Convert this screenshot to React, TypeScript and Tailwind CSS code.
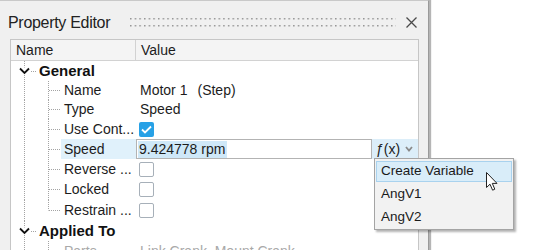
import React from "react";

const DOT = "#a3a3a3";

function ChildLines({ h, last }: { h: number; last?: boolean }) {
  const mid = Math.floor(h / 2) + 0.5;
  return (
    <svg width="50" height={h} className="shrink-0">
      <line x1="13.5" y1="0" x2="13.5" y2={h} stroke={DOT} strokeDasharray="1 1" />
      <line x1="37.5" y1="0" x2="37.5" y2={last ? mid : h} stroke={DOT} strokeDasharray="1 1" />
      <line x1="38" y1={mid} x2="50" y2={mid} stroke={DOT} strokeDasharray="1 1" />
    </svg>
  );
}

function GroupLines({ h }: { h: number }) {
  const mid = Math.floor(h / 2) + 0.5;
  return (
    <svg width="26" height={h} className="shrink-0">
      <line x1="13.5" y1="0" x2="13.5" y2={h} stroke={DOT} strokeDasharray="1 1" />
      <line x1="18" y1={mid} x2="26" y2={mid} stroke={DOT} strokeDasharray="1 1" />
      <rect x="8" y={mid - 4} width="11" height="7" fill="white" />
      <path d={`M9 ${mid - 3} L13.5 ${mid + 1.5} L18 ${mid - 3}`} stroke="#111" strokeWidth="1.8" fill="none" />
    </svg>
  );
}

function CheckBox({ checked }: { checked?: boolean }) {
  if (checked)
    return (
      <div className="w-[15px] h-[15px] rounded-[2px] bg-[#27a1e6] flex items-center justify-center">
        <svg width="11" height="9" viewBox="0 0 11 9">
          <path d="M1 4.5 L4 7.5 L10 1.5" stroke="white" strokeWidth="1.8" fill="none" />
        </svg>
      </div>
    );
  return <div className="w-[15px] h-[15px] rounded-[2px] border border-[#a7b0b9] bg-white" />;
}

function Group({ label, h }: { label: string; h: number }) {
  return (
    <div className="flex" style={{ height: h }}>
      <GroupLines h={h} />
      <div className="pl-[2px] flex items-center font-bold text-[15px] text-[#111]">{label}</div>
    </div>
  );
}

function Row({
  name,
  h,
  last,
  active,
  muted,
  children,
}: {
  name: string;
  h: number;
  last?: boolean;
  active?: boolean;
  muted?: boolean;
  children?: React.ReactNode;
}) {
  return (
    <div className="flex" style={{ height: h }}>
      <div className="w-[125px] flex shrink-0">
        <ChildLines h={h} last={last} />
        <div
          className={`flex-1 pl-[3px] flex items-center whitespace-nowrap ${active ? "bg-[#e0f1fb]" : ""} ${
            muted ? "text-[#a9a9a9]" : "text-[#1c1c1c]"
          }`}
        >
          {name}
        </div>
      </div>
      <div className={`flex-1 flex items-center ${muted ? "text-[#a9a9a9]" : "text-[#1c1c1c]"}`}>{children}</div>
    </div>
  );
}

export default function App() {
  return (
    <div className="w-[533px] h-[250px] bg-white relative overflow-hidden font-['Liberation_Sans',Arial,sans-serif] text-[14px]">
      <div className="w-[429px] h-full bg-[#f0f0f0] border-t border-[#c9c9c9] border-r border-r-[#9a9a9a] shadow-[2px_0_1px_#b5b5b5] flex flex-col">
        {/* title bar */}
        <div className="h-[38px] shrink-0 flex items-center pl-2 pr-[11px] pt-[5px]">
          <span className="text-[16px] tracking-[-0.3px] text-[#222]">Property Editor</span>
          <svg className="flex-1 ml-[20px] mr-[10px]" height="10">
            <defs>
              <pattern id="grip" width="4.66" height="7" patternUnits="userSpaceOnUse">
                <rect x="0" y="0" width="1.5" height="1.5" fill="#959595" />
              </pattern>
            </defs>
            <rect x="0" y="0" width="100%" height="9" fill="url(#grip)" />
          </svg>
          <svg width="11" height="11" viewBox="0 0 11 11">
            <path d="M0.5 0.5 L10.5 10.5 M10.5 0.5 L0.5 10.5" stroke="#4a4a4a" strokeWidth="1.3" />
          </svg>
        </div>

        {/* table */}
        <div className="ml-[10px] w-[409px] flex-1 border border-[#c6c6c6] bg-white flex flex-col">
          <div className="h-[21px] shrink-0 flex bg-[#f4f4f4] border-b border-[#d2d2d2] text-[#1c1c1c]">
            <div className="w-[125px] border-r border-[#d2d2d2] pl-[5px] flex items-center">Name</div>
            <div className="pl-[5px] flex items-center">Value</div>
          </div>

          <Group label="General" h={20} />
          <Row name="Name" h={19}>
            <span className="pl-[4px] whitespace-pre">
              Motor 1<span className="ml-[10px]">(Step)</span>
            </span>
          </Row>
          <Row name="Type" h={19}>
            <span className="pl-[4px]">Speed</span>
          </Row>
          <Row name="Use Cont..." h={20}>
            <div className="pl-[3px]">
              <CheckBox checked />
            </div>
          </Row>
          <Row name="Speed" h={20} active>
            <div className="w-[236px] h-full border border-[#b3b3b3] bg-white flex items-center pl-[1px]">
              <span className="bg-[#cfe8f8] pl-[1px] pr-[2px] leading-[17px]">9.424778 rpm</span>
            </div>
            <div className="flex-1 h-full bg-[#dceef9] flex items-center pl-[4px] gap-[5px]">
              <span className="text-[#222]">ƒ(x)</span>
              <svg width="8" height="6" viewBox="0 0 8 6">
                <path d="M1 1 L4 4.5 L7 1" stroke="#8a8a8a" strokeWidth="1.8" fill="none" />
              </svg>
            </div>
          </Row>
          <Row name="Reverse ..." h={20}>
            <div className="pl-[3px]">
              <CheckBox />
            </div>
          </Row>
          <Row name="Locked" h={21}>
            <div className="pl-[3px]">
              <CheckBox />
            </div>
          </Row>
          <Row name="Restrain ..." h={21} last>
            <div className="pl-[3px]">
              <CheckBox />
            </div>
          </Row>
          <Group label="Applied To" h={20} />
          <Row name="Parts" h={20} muted>
            <span className="pl-[4px] whitespace-nowrap">Link Crank, Mount Crank</span>
          </Row>
        </div>
      </div>

      {/* dropdown menu */}
      <div className="absolute left-[374px] top-[158px] w-[140px] bg-[#f2f2f2] border border-[#a4a4a4] shadow-[2px_2px_2px_rgba(0,0,0,0.3)] px-[1px] pt-[2px] pb-[1px] flex flex-col gap-[2px] text-[13.5px] text-[#1a1a1a]">
        <div className="h-[21px] bg-[#d9edf9] border border-[#a9d2ee] pl-[4px] flex items-center">Create Variable</div>
        <div className="h-[21px] pl-[5px] flex items-center">AngV1</div>
        <div className="h-[21px] pl-[5px] flex items-center">AngV2</div>
      </div>

      {/* mouse cursor */}
      <svg className="absolute left-[486px] top-[172px]" width="14" height="20" viewBox="0 0 14 20">
        <path
          d="M0.5 0.5 L0.5 15.5 L4 12.2 L6.6 18.2 L8.8 17.2 L6.3 11.4 L11 11.4 Z"
          fill="white"
          stroke="#222"
          strokeWidth="1"
          strokeLinejoin="round"
        />
      </svg>
    </div>
  );
}
